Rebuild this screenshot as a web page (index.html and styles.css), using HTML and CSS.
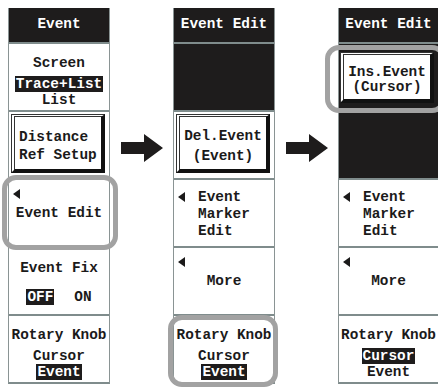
FILE: index.html
```html
<!DOCTYPE html>
<html lang="en">
<head>
  <meta charset="UTF-8">
  <title>Event Edit soft keys</title>
  <link rel="stylesheet" href="styles.css">
</head>
<body>
<div class="board">

  <!-- menu 1 : Event -->
  <div class="menu">
    <div class="menu-title">Event</div>
    <div class="key key-choice">
      <div class="title">Screen</div>
      <div class="opt"><span class="sel">Trace+List</span></div>
      <div class="opt">List</div>
    </div>
    <div class="key key-btn">
      <div class="btn btn-left">
        <div>Distance</div>
        <div>Ref Setup</div>
      </div>
    </div>
    <div class="key key-sub">
      <i class="tri"></i>
      <div class="label">Event Edit</div>
      <div class="ring ring-a"></div>
    </div>
    <div class="key key-toggle">
      <div class="title">Event Fix</div>
      <div class="opts"><span class="sel">OFF</span><span>ON</span></div>
    </div>
    <div class="key key-choice">
      <div class="title">Rotary Knob</div>
      <div class="opt">Cursor</div>
      <div class="opt"><span class="sel">Event</span></div>
    </div>
  </div>

  <div class="arrow">
    <svg width="42" height="28" viewBox="0 0 42 28"><polygon points="0,8 23,8 23,0 42,14 23,28 23,20 0,20"/></svg>
  </div>

  <!-- menu 2 : Event Edit, delete -->
  <div class="menu">
    <div class="menu-title">Event Edit</div>
    <div class="key key-dark"></div>
    <div class="key key-btn">
      <div class="btn btn-center">
        <div>Del.Event</div>
        <div>(Event)</div>
      </div>
    </div>
    <div class="key key-list">
      <i class="tri"></i>
      <div class="lines">
        <div>Event</div>
        <div>Marker</div>
        <div>Edit</div>
      </div>
    </div>
    <div class="key key-sub">
      <i class="tri"></i>
      <div class="label">More</div>
    </div>
    <div class="key key-choice">
      <div class="title">Rotary Knob</div>
      <div class="opt">Cursor</div>
      <div class="opt"><span class="sel">Event</span></div>
      <div class="ring ring-b"></div>
    </div>
  </div>

  <div class="arrow">
    <svg width="42" height="28" viewBox="0 0 42 28"><polygon points="0,8 23,8 23,0 42,14 23,28 23,20 0,20"/></svg>
  </div>

  <!-- menu 3 : Event Edit, insert (cut by the right edge) -->
  <div class="menu menu-last">
    <div class="menu-title">Event Edit</div>
    <div class="key key-dark key-btn key-btn-top">
      <div class="btn btn-center btn-small">
        <div>Ins.Event</div>
        <div>(Cursor)</div>
      </div>
      <div class="ring ring-c"></div>
    </div>
    <div class="key key-dark"></div>
    <div class="key key-list">
      <i class="tri"></i>
      <div class="lines">
        <div>Event</div>
        <div>Marker</div>
        <div>Edit</div>
      </div>
    </div>
    <div class="key key-sub">
      <i class="tri"></i>
      <div class="label">More</div>
    </div>
    <div class="key key-choice">
      <div class="title">Rotary Knob</div>
      <div class="opt"><span class="sel">Cursor</span></div>
      <div class="opt">Event</div>
    </div>
  </div>

</div>
</body>
</html>
```

FILE: styles.css
```css
html, body {
  overflow: hidden;
}
body {
  margin: 0;
  background: #fff;
  color: #1b1a1a;
  font-family: "Liberation Mono", "DejaVu Sans Mono", monospace;
  font-size: 14.4px;
  font-weight: bold;
}
.board {
  display: flex;
  align-items: flex-start;
  box-sizing: border-box;
  width: 438px;
  height: 387px;
  padding: 8px 0 0 8px;
  overflow: hidden;
}

/* one soft key column */
.menu {
  flex: none;
  box-sizing: border-box;
  width: 102px;
  border-left: 1px solid #8a9494;
  border-right: 1px solid #8a9494;
  border-bottom: 2px solid #7f8c8c;
}
.menu-last {
  width: 100px;
  border-right: 0;
}
.menu-title {
  height: 34px;
  line-height: 33px;
  background: #1e1c1c;
  color: #fff;
  text-align: center;
  white-space: nowrap;
}
.key {
  position: relative;
  box-sizing: border-box;
  height: 68px;
  border-top: 2px solid #7f8c8c;
  text-align: center;
  white-space: nowrap;
}
.key-dark {
  background: #1e1c1c;
}

.sel {
  background: #1e1c1c;
  color: #fff;
  padding: 0 1px;
}

/* title + choice list */
.key-choice {
  padding-top: 11px;
}
.key-choice .title {
  line-height: 16px;
  margin-bottom: 5px;
}
.key-choice .opt {
  line-height: 16px;
}

/* OFF / ON */
.key-toggle {
  padding-top: 12px;
}
.key-toggle .title {
  line-height: 16px;
}
.key-toggle .opts {
  margin-top: 13px;
  line-height: 16px;
  display: flex;
  justify-content: center;
  gap: 20px;
}

/* sub menu keys */
.tri {
  display: block;
  width: 0;
  height: 0;
  border-top: 5px solid transparent;
  border-bottom: 5px solid transparent;
  border-right: 7px solid #1b1a1a;
}
.key-sub {
  padding: 9px 0 0 4px;
}
.key-sub .label {
  margin: 6px 0 0 -4px;
  line-height: 16px;
}
.key-list {
  display: flex;
  align-items: flex-start;
  padding: 9px 0 0 4px;
  text-align: left;
}
.key-list .tri {
  margin-top: 3px;
}
.key-list .lines {
  margin-left: 13px;
  line-height: 17px;
}

/* raised buttons */
.key-btn {
  padding: 2px 4px 5px 2px;
}
.key-btn-top {
  padding: 8px 4px 7px 1px;
}
.btn {
  box-sizing: border-box;
  height: 100%;
  background: #fff;
  border-left: 4px double #333;
  border-top: 3px double #333;
  border-right: 4px solid #111;
  border-bottom: 4px solid #111;
}
.btn-left {
  padding: 11px 0 0 4px;
  line-height: 18px;
  text-align: left;
}
.btn-center {
  padding-top: 9px;
  line-height: 20px;
}
.btn-small {
  padding-top: 10px;
  line-height: 15px;
}

/* grey highlight rings */
.ring {
  position: absolute;
  z-index: 2;
  border: 5px solid #a2a2a2;
  border-radius: 14px;
}
.ring-a {
  top: -5px;
  bottom: -4px;
  left: -7px;
  right: -9px;
}
.ring-b {
  top: -1px;
  bottom: -5px;
  left: -6px;
  right: -4px;
}
.ring-c {
  top: 1px;
  bottom: -3px;
  left: -14px;
  right: -8px;
}

/* arrows between menus */
.arrow {
  flex: none;
  width: 63px;
  display: flex;
  justify-content: center;
  padding-top: 126px;
}
.arrow svg {
  fill: #1e1c1c;
}
```
